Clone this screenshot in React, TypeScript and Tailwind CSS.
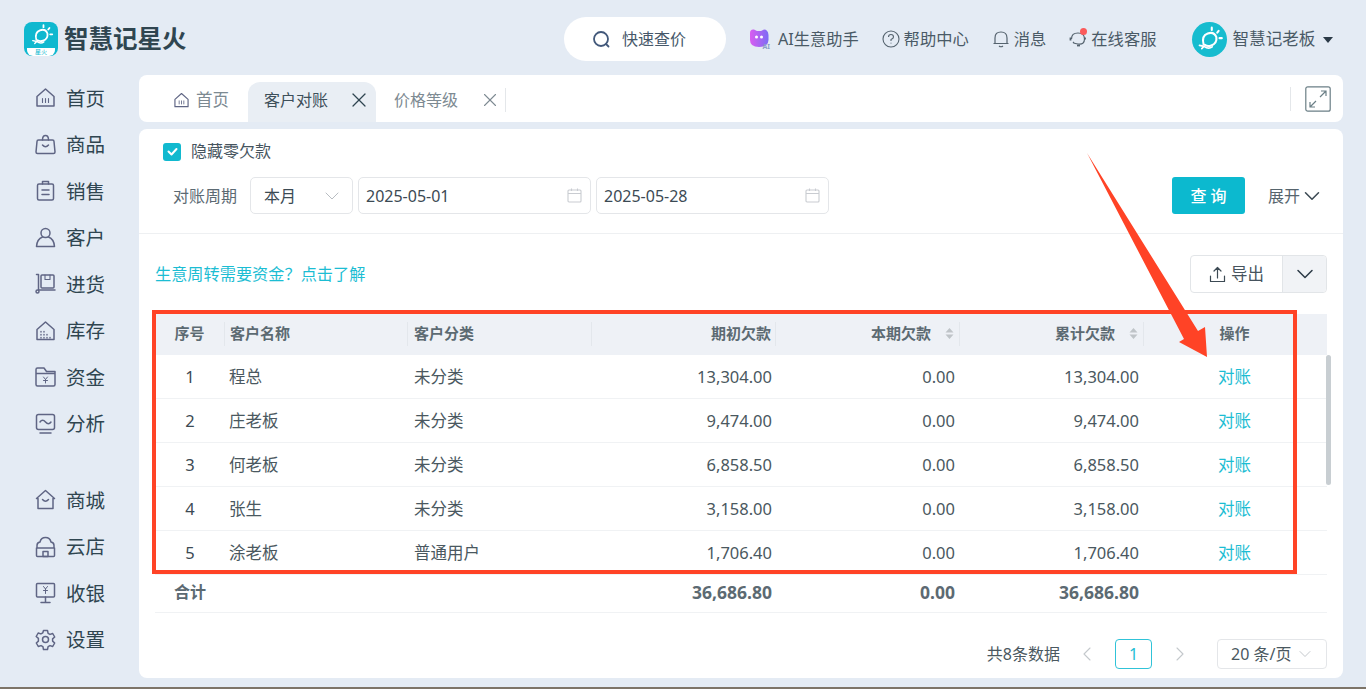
import { ChevronDown, ChevronLeft, ChevronRight, X } from 'lucide-react'

const FONT = '[font-family:"Noto_Sans","Noto_Sans_CJK_SC",sans-serif]'

// Shared stroke props for the sidebar icons
const S = { fill: 'none', stroke: '#5f6584', strokeWidth: 1.5, strokeLinecap: 'round', strokeLinejoin: 'round' } as const

const navIcons: Record<string, React.ReactNode> = {
  首页: (<><path {...S} d="M2 9.5 10.5 2 19 9.5V19H2z" /><path {...S} d="M7.5 11.5v4M10.5 11.5v4M13.5 11.5v4" strokeWidth={1.1} /></>),
  商品: (<><path {...S} d="M3.5 6H17.5q1.5 0 1.5 1.5L20 18q0 1.5-1.5 1.5h-16Q1 19.5 1 18L2 7.5Q2 6 3.5 6z" /><path {...S} d="M7.5 6Q7.5 1.5 10.5 1.5T13.5 6M7.5 11q3 3.5 6 0" /></>),
  销售: (<><rect {...S} x="2.5" y="4" width="16" height="16" rx="1.5" /><path {...S} d="M7.5 4V1.5h6V4M7 10h7M7 14.5h7" /></>),
  客户: (<><circle {...S} cx="10.5" cy="6" r="4.5" /><path {...S} d="M7.5 10Q2 12 1.5 19.5h18Q19 12 13.5 10" /></>),
  进货: (<><path {...S} d="M1.5 1.5H3.5V17M3.5 17H20" /><circle {...S} cx="2.5" cy="18.5" r="1.5" /><rect {...S} x="6" y="2" width="13" height="13" rx="1" /><path {...S} d="M10 2v4.5h5V2" strokeWidth={1.1} /></>),
  库存: (<><path {...S} d="M2 9.5 10.5 2 19 9.5V19.5H2z" /><path {...S} d="M6 11.5v.5M9 11.5v.5M6 14.5v.5M9 14.5v.5M12 14.5v.5M6 17.5v.5M9 17.5v.5M12 17.5v.5M15 17.5v.5" strokeWidth={1.4} /></>),
  资金: (<><path {...S} d="M1 3.5Q1 2 2.5 2H9l2.5 3.5H20V18.5Q20 20 18.5 20H2.5Q1 20 1 18.5zM1 7.5H20" /><path {...S} d="M8.5 11l2 2.5 2-2.5M10.5 13.5V17M8.5 14.5h4" strokeWidth={1} /></>),
  分析: (<><rect {...S} x="1.5" y="1.5" width="18" height="15" rx="2" /><path {...S} d="M5 9q2.5-3.5 5.5 0t5.5 0M5 20h11" /></>),
  商城: (<><path {...S} d="M1.5 9.5 10.5 1.5 19.5 9.5H18V19.5H3V9.5z" /><path {...S} d="M7.5 10.5q3 3.5 6 0" /></>),
  云店: (<><path {...S} d="M2 12V9.5Q2 6.5 5 6 6 1.5 10.5 1.5T16 6q3 .5 3 3.5V12M1.5 12H19.5V19.5Q19.5 20.5 18.5 20.5H2.5Q1.5 20.5 1.5 19.5z" /><rect {...S} x="8" y="15.5" width="5" height="5" /></>),
  收银: (<><rect {...S} x="1.5" y="1.5" width="18" height="13.5" rx="1" /><path {...S} d="M10.5 15v5M6 20.5h9" /><path {...S} d="M8.5 4.5l2 2.5 2-2.5M10.5 7v4.5M8.5 8.5h4" strokeWidth={1} /></>),
  设置: (<><path {...S} d="M8.5 1.5h4l.6 2.8 1.9 1.1 2.7-.9 2 3.5-2.1 1.9v2.2l2.1 1.9-2 3.5-2.7-.9-1.9 1.1-.6 2.8h-4l-.6-2.8-1.9-1.1-2.7.9-2-3.5 2.1-1.9V9.4L1.2 7.5l2-3.5 2.7.9 1.9-1.1z" /><circle {...S} cx="10.5" cy="10.5" r="3" /></>),
}

const navTop = ['首页', '商品', '销售', '客户', '进货', '库存', '资金', '分析']
const navBottom = ['商城', '云店', '收银', '设置']

function NavItem({ name }: { name: string }) {
  return (
    <div className="flex h-[46.5px] items-center pl-[35px]">
      <svg width="21" height="22" viewBox="0 0 21 22">{navIcons[name]}</svg>
      <span className="ml-[10px] text-[19.5px] leading-none text-[#2f4550]">{name}</span>
    </div>
  )
}

// Bulb mark used in the logo and the avatar
function Bulb({ size }: { size: number }) {
  return (
    <svg width={size} height={size} viewBox="0 0 34 34" fill="none" stroke="#fff" strokeWidth="2.3" strokeLinecap="round">
      <path d="M10.5 22.5Q8 13 15 10.5T24.5 14.5Q25.5 21 19 23.5 15 25 12 23" />
      <path d="M6 23.5l5 1-2.5 2.5M11 24.5q5 3.5 9 .5" strokeWidth="1.8" />
      <path d="M19.5 4v2.5M27 7.5l-1.5 2M30.5 15.5H28" />
    </svg>
  )
}

function CalendarIcon() {
  return (
    <svg width="15" height="15" viewBox="0 0 15 15" fill="none" stroke="#c9ccd1" strokeWidth="1.1">
      <rect x="1" y="2" width="13" height="12" rx="1" />
      <path d="M1 5.5h13M4.5 .5v2.5M10.5 .5v2.5" />
    </svg>
  )
}

function SortIcon() {
  return (
    <svg width="9" height="13" viewBox="0 0 9 13" fill="#bfc4c8" className="ml-[14px]">
      <path d="M4.5 1 8.5 5.5H.5zM4.5 12 .5 7.5h8z" />
    </svg>
  )
}

const rows = [
  ['1', '程总', '未分类', '13,304.00', '0.00', '13,304.00'],
  ['2', '庄老板', '未分类', '9,474.00', '0.00', '9,474.00'],
  ['3', '何老板', '未分类', '6,858.50', '0.00', '6,858.50'],
  ['4', '张生', '未分类', '3,158.00', '0.00', '3,158.00'],
  ['5', '涂老板', '普通用户', '1,706.40', '0.00', '1,706.40'],
]

const GRID = 'grid grid-cols-[70px_183px_184px_184px_184px_184px_183px]'

function HeadCell({ children, className = '' }: { children: React.ReactNode; className?: string }) {
  return (
    <div className={`flex h-[24px] items-center border-r border-[#e3e7ec] ${className}`}>{children}</div>
  )
}

export default function App() {
  return (
    <div className={`relative h-[689px] w-[1366px] overflow-hidden bg-[#e4ebf4] ${FONT}`}>
      {/* Top bar */}
      <header className="flex h-[75px] items-center pt-[3px]">
        <div className="ml-[24px] flex h-[34px] w-[34px] flex-col overflow-hidden rounded-[8px] bg-[#0fb8cf]">
          <div className="flex h-[26px] items-center justify-center"><Bulb size={27} /></div>
          <div className="mx-[3px] h-[8px] shrink-0 rounded-b-[6px] bg-white text-center text-[6px] leading-[8px] text-[#0fb8cf]">星火</div>
        </div>
        <span className="ml-[6px] w-[122px] text-[24.5px] leading-none font-bold whitespace-nowrap text-[#2f4550]">智慧记星火</span>

        <div className="ml-[378px] flex h-[44px] w-[162px] items-center rounded-full bg-white pl-[28px]">
          <svg width="19" height="19" viewBox="0 0 19 19" fill="none" strokeWidth="1.8" strokeLinecap="round">
            <circle cx="9" cy="9" r="7" stroke="#42587a" />
            <path d="M14 14l2.5 2.5" stroke="#42587a" />
          </svg>
          <span className="ml-[11px] text-[16px] text-[#46586a]">快速查价</span>
        </div>

        <svg width="22" height="22" viewBox="0 0 22 22" className="ml-[23px]">
          <defs>
            <linearGradient id="ai" x1="0" y1="0" x2="1" y2="0">
              <stop offset="0" stopColor="#d95cf0" />
              <stop offset="1" stopColor="#7c6cf5" />
            </linearGradient>
          </defs>
          <path d="M1 5Q1 1 5 1.5L8 3H12L15 1.5Q19 1.5 19.5 7V12Q19 19 10 19 Q1 19 1 12z" fill="url(#ai)" />
          <circle cx="7.5" cy="9" r="1.5" fill="#fff" />
          <circle cx="12.5" cy="9" r="1.5" fill="#fff" />
          <text x="13.5" y="21" fontSize="7" fontWeight="700" fill="#8aa0c8">AI</text>
        </svg>
        <span className="ml-[7px] text-[16.2px] whitespace-nowrap text-[#4a5a66]">AI生意助手</span>

        <svg width="18" height="18" viewBox="0 0 18 18" fill="none" stroke="#55636e" strokeWidth="1.1" className="ml-[23px]">
          <circle cx="9" cy="9" r="8" />
          <path d="M6.5 7Q6.5 4.5 9 4.5T11.5 7Q11.5 8.5 9 9.5V11M9 12.8v.7" />
        </svg>
        <span className="ml-[4px] text-[16.3px] whitespace-nowrap text-[#4a5a66]">帮助中心</span>

        <svg width="16" height="18" viewBox="0 0 16 18" fill="none" stroke="#55636e" strokeWidth="1.2" className="ml-[24px]">
          <path d="M2 13.5V8Q2 2 8 2T14 8V13.5zM.5 13.5h15M6 16q2 1.5 4 0" />
        </svg>
        <span className="ml-[5px] text-[16.3px] whitespace-nowrap text-[#4a5a66]">消息</span>

        <div className="relative ml-[23px] h-[20px] w-[18px]">
          <svg width="18" height="20" viewBox="0 0 18 20" fill="none" stroke="#55636e" strokeWidth="1.2">
            <path d="M2.5 10Q2.5 4 9 4T15.5 10 9 15 5 13" />
            <path d="M1.5 8.5v3M16 8.5v2" strokeWidth="1.8" />
            <path d="M8 16.5h3" strokeWidth="1.8" />
          </svg>
          <span className="absolute top-[-1px] left-[11px] h-[7px] w-[7px] rounded-full bg-[#fb5a5a]" />
        </div>
        <span className="ml-[4px] text-[16.3px] whitespace-nowrap text-[#4a5a66]">在线客服</span>

        <div className="ml-[36px] flex h-[35px] w-[35px] items-center justify-center rounded-full bg-[#16bccf]"><Bulb size={31} /></div>
        <span className="ml-[5px] text-[16.6px] whitespace-nowrap text-[#4a5a66]">智慧记老板</span>
        <span className="mt-[1px] ml-[8px] h-0 w-0 border-x-[5.5px] border-t-[6px] border-x-transparent border-t-[#2b3a47]" />
      </header>

      <div className="flex">
        {/* Sidebar */}
        <aside className="w-[139px] shrink-0">
          {navTop.map((n) => <NavItem key={n} name={n} />)}
          <div className="h-[30px]" />
          {navBottom.map((n) => <NavItem key={n} name={n} />)}
        </aside>

        <main className="w-[1204px]">
          {/* Tabs */}
          <div className="flex h-[47px] rounded-[8px] bg-white">
            <div className="flex w-[109px] items-center pt-[3px] pl-[34px] text-[16.5px] text-[#7d8a92]">
              <svg width="17" height="17" viewBox="0 0 21 22">{navIcons['首页']}</svg>
              <span className="ml-[6px]">首页</span>
            </div>
            <div className="mt-[7px] flex w-[128px] items-center rounded-t-[12px] bg-[#e9eef4] pb-[4px] pl-[16px] text-[16px] whitespace-nowrap text-[#3d4f5a]">
              <span>客户对账</span>
              <X size={24} strokeWidth={1.2} className="ml-[19px] shrink-0 text-[#2f4550]" />
            </div>
            <div className="flex w-[131px] items-center pt-[3px] pl-[18px] text-[16px] whitespace-nowrap text-[#7d8a92]">
              <span>价格等级</span>
              <X size={22} strokeWidth={1.2} className="ml-[21px] shrink-0 text-[#7d8a92]" />
              <span className="ml-[4px] h-[24px] w-px bg-[#e4e7ea]" />
            </div>
            <div className="ml-auto flex items-center pr-[12px]">
              <span className="mr-[14px] h-[24px] w-px bg-[#e4e7ea]" />
              <svg width="26" height="26" viewBox="0 0 26 26" fill="none" stroke="#6b7f86" strokeWidth="1.2">
                <rect x=".8" y=".8" width="24.4" height="24.4" rx="2" />
                <path d="M15 11l6-6M16 5h5v5M11 15l-6 6M5 16v5h5" />
              </svg>
            </div>
          </div>

          {/* Content card */}
          <div className="mt-[7px] h-[549px] rounded-[8px] bg-white">
            <div className="h-[105px] border-b border-[#eef0f2]">
              <div className="flex items-center pt-[13px] pl-[24px]">
                <span className="flex h-[18px] w-[18px] items-center justify-center rounded-[3px] bg-[#11b9cf]">
                  <svg width="13" height="13" viewBox="0 0 13 13" fill="none" stroke="#fff" strokeWidth="2" strokeLinecap="round" strokeLinejoin="round"><path d="M2.5 6.5l3 3 5-5.5" /></svg>
                </span>
                <span className="ml-[10px] text-[16px] leading-[19px] text-[#46545e]">隐藏零欠款</span>
              </div>
              <div className="mt-[16px] flex items-center pl-[34px]">
                <span className="w-[77px] text-[16px] text-[#5c6a73]">对账周期</span>
                <div className="flex h-[37px] w-[103px] items-center justify-between rounded-[5px] border border-[#e4e6e9] pr-[8px] pl-[13px] text-[16px] text-[#3c4a54]">
                  本月
                  <ChevronDown size={24} strokeWidth={1} className="text-[#b8bdc2]" />
                </div>
                <div className="ml-[5px] flex h-[37px] w-[233px] items-center justify-between rounded-[5px] border border-[#e4e6e9] pr-[8px] pl-[7px] text-[16px] text-[#3c4a54]">
                  2025-05-01
                  <CalendarIcon />
                </div>
                <div className="ml-[5px] flex h-[37px] w-[233px] items-center justify-between rounded-[5px] border border-[#e4e6e9] pr-[8px] pl-[7px] text-[16px] text-[#3c4a54]">
                  2025-05-28
                  <CalendarIcon />
                </div>
                <button className="ml-[343px] h-[37px] w-[73px] rounded-[3px] bg-[#0cb9cf] pl-[4px] text-[16px] font-medium tracking-[4px] text-white">查询</button>
                <span className="ml-[23px] text-[16px] text-[#56646d]">展开</span>
                <ChevronDown size={26} strokeWidth={1.4} className="ml-[-1px] shrink-0 text-[#3c4a54]" />
              </div>
            </div>

            {/* Promo link and export */}
            <div className="flex h-[80px] items-center pr-[16px] pl-[16px]">
              <a className="text-[16.2px] text-[#1cbdd3]">生意周转需要资金？点击了解</a>
              <div className="ml-auto flex h-[38px] w-[137px] rounded-[4px] border border-[#e2e5e8]">
                <div className="flex w-[91px] items-center justify-center text-[16.5px] text-[#46545e]">
                  <svg width="17" height="17" viewBox="0 0 16 17" fill="none" stroke="#3c4a54" strokeWidth="1.2" strokeLinecap="round" strokeLinejoin="round" className="mr-[5px]">
                    <path d="M8 12V1.5M4.5 5 8 1.5 11.5 5M1 10v5.5h14V10" />
                  </svg>
                  导出
                </div>
                <div className="flex flex-1 items-center justify-center rounded-r-[4px] border-l border-[#e2e5e8] bg-[#f1f3f6]">
                  <ChevronDown size={28} strokeWidth={1.3} className="text-[#2f3d48]" />
                </div>
              </div>
            </div>

            {/* Table */}
            <div className="relative mx-[16px] w-[1172px] text-[16.5px]">
              <div className={`${GRID} h-[41px] items-center bg-[#eef1f6] pb-[2px] text-[15px] font-bold text-[#5c6a72]`}>
                <HeadCell className="justify-center">序号</HeadCell>
                <HeadCell className="pl-[5px]">客户名称</HeadCell>
                <HeadCell className="pl-[6px]">客户分类</HeadCell>
                <HeadCell className="justify-end pr-[4px]">期初欠款</HeadCell>
                <HeadCell className="justify-end pr-[5px]">本期欠款<SortIcon /></HeadCell>
                <HeadCell className="justify-end pr-[5px]">累计欠款<SortIcon /></HeadCell>
                <div className="pr-[2px] text-center">操作</div>
              </div>
              {rows.map((r) => (
                <div key={r[0]} className={`${GRID} h-[44px] items-center border-b border-[#f0f2f4] pt-[2px] text-[#4a5860]`}>
                  <div className="text-center text-[#3c4a54]">{r[0]}</div>
                  <div className="pl-[4px]">{r[1]}</div>
                  <div className="pl-[6px]">{r[2]}</div>
                  <div className="pr-[4px] text-right">{r[3]}</div>
                  <div className="pr-[5px] text-right">{r[4]}</div>
                  <div className="pr-[5px] text-right">{r[5]}</div>
                  <div className="pr-[2px] text-center text-[#1cbdd3]">对账</div>
                </div>
              ))}
              <div className={`${GRID} h-[38px] items-center border-b border-[#f0f2f4] pb-[3px] text-[17.5px] font-bold text-[#5c6a72]`}>
                <div className="text-center text-[16px]">合计</div>
                <div />
                <div />
                <div className="pr-[4px] text-right">36,686.80</div>
                <div className="pr-[5px] text-right">0.00</div>
                <div className="pr-[5px] text-right">36,686.80</div>
                <div />
              </div>
              <span className="absolute top-[41px] right-[-4px] h-[130px] w-[5px] rounded-full bg-[#c8ced2]" />
            </div>

            {/* Pagination */}
            <div className="mt-[26px] flex items-center justify-end pr-[16px] text-[16px] text-[#4a5860]">
              <span>共8条数据</span>
              <ChevronLeft size={24} strokeWidth={1.1} className="ml-[15px] text-[#c4c8cc]" />
              <span className="ml-[16px] flex h-[30px] w-[37px] items-center justify-center rounded-[4px] border border-[#30c3d8] text-[#1cbdd3]">1</span>
              <ChevronRight size={24} strokeWidth={1.1} className="ml-[16px] text-[#c4c8cc]" />
              <div className="ml-[25px] flex h-[30px] w-[110px] items-center justify-between rounded-[4px] border border-[#e4e6e9] pr-[11px] pl-[13px]">
                20 条/页
                <ChevronDown size={20} strokeWidth={1} className="text-[#b8bdc2]" />
              </div>
            </div>
          </div>
        </main>
      </div>

      {/* Annotation drawn over the screenshot */}
      <div className="absolute top-[310px] left-[152px] h-[264px] w-[1145px] border-4 border-[#ff4326]" />
      <svg className="absolute top-0 left-0" width="1366" height="689" viewBox="0 0 1366 689" fill="#ff4326">
        <path d="M1087 153 1198 331 1205 327 1207 357 1179 342 1184 339z" />
      </svg>
      <div className="absolute right-0 bottom-0 left-0 h-[2px] bg-[#7d7468]" />
    </div>
  )
}
